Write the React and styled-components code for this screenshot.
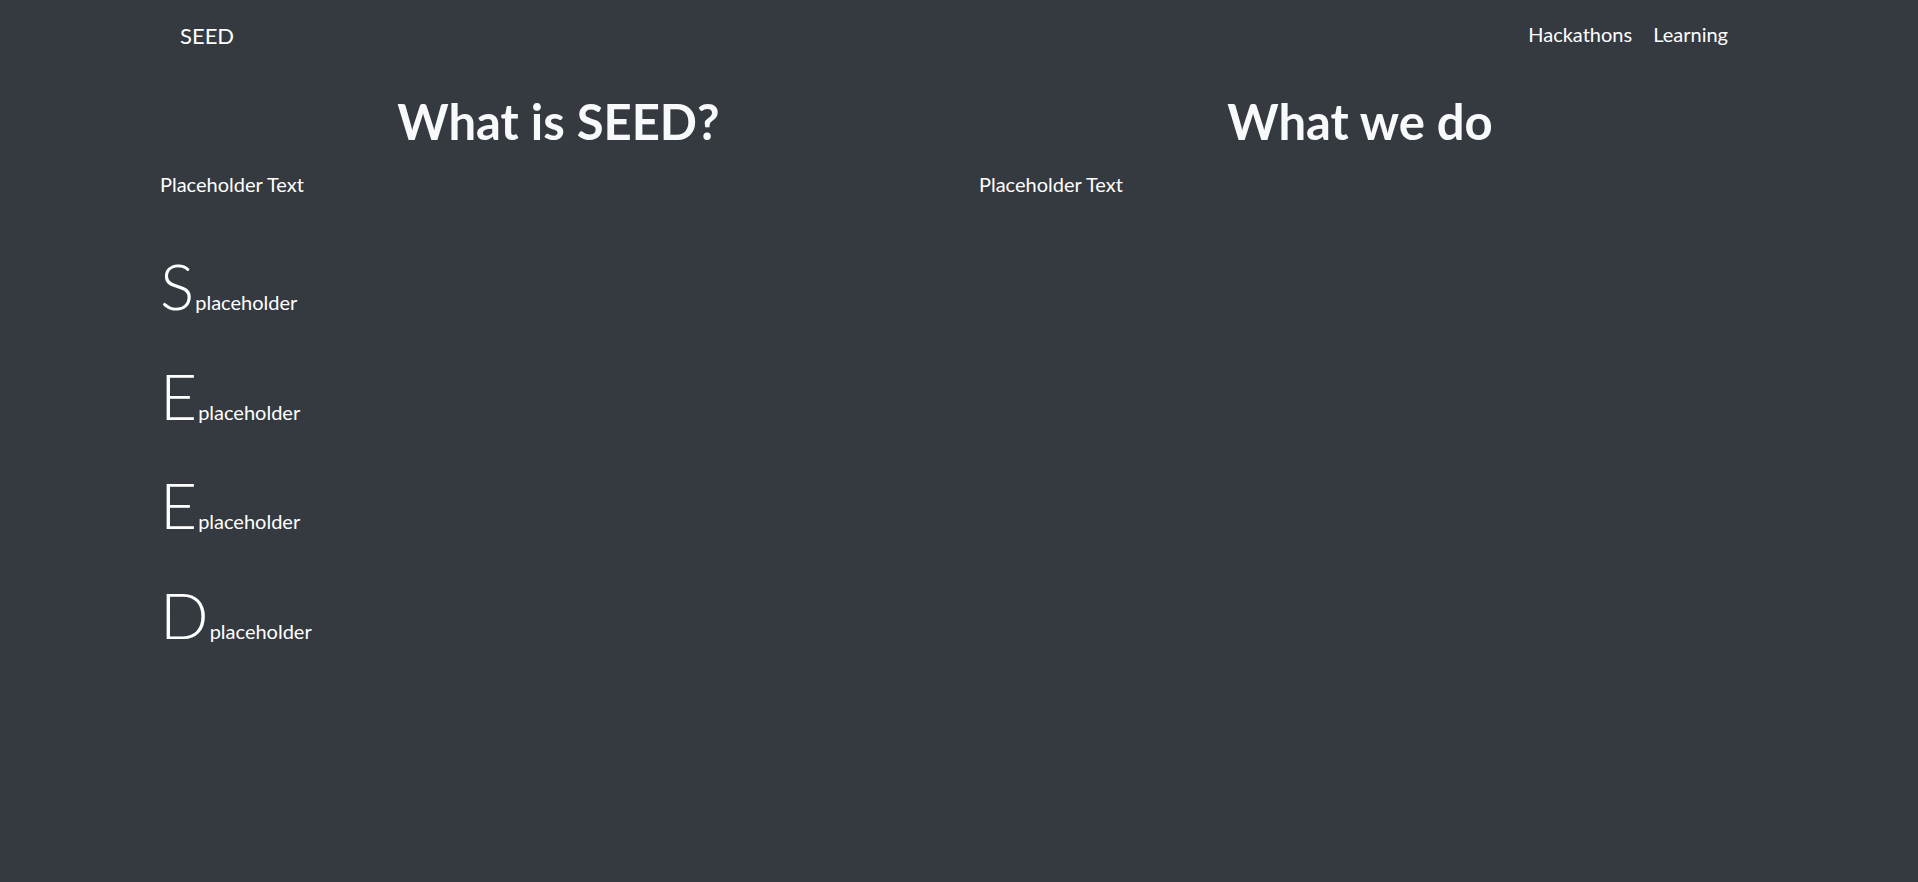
import React from 'react';
import styled, { createGlobalStyle } from 'styled-components';

const GlobalStyle = createGlobalStyle`
  html, body {
    margin: 0;
    padding: 0;
    background-color: #343a40;
    font-family: Lato, "Open Sans", sans-serif;
    color: #ffffff;
  }
`;

const letters = [
  { letter: 'S', text: 'placeholder' },
  { letter: 'E', text: 'placeholder' },
  { letter: 'E', text: 'placeholder' },
  { letter: 'D', text: 'placeholder' },
];

const App = () => (
  <Page>
    <GlobalStyle />
    <Navbar>
      <Brand>SEED</Brand>
      <NavLinks>
        <NavLink>Hackathons</NavLink>
        <NavLink>Learning</NavLink>
      </NavLinks>
    </Navbar>
    <Main>
      <Column>
        <Heading $width={797}>What is SEED?</Heading>
        <Text>Placeholder Text</Text>
        <LetterList>
          {letters.map((item, i) => (
            <LetterRow key={i}>
              <BigLetter>{item.letter}</BigLetter>
              <Word>{item.text}</Word>
            </LetterRow>
          ))}
        </LetterList>
      </Column>
      <Column>
        <Heading $width={762}>What we do</Heading>
        <Text>Placeholder Text</Text>
      </Column>
    </Main>
  </Page>
);

const Page = styled.div`
  min-height: 882px;
  background-color: #343a40;
`;

const Navbar = styled.nav`
  box-sizing: border-box;
  height: 64px;
  padding: 24px 190px 0 180px;
  display: flex;
  justify-content: space-between;
  align-items: flex-start;
`;

const Brand = styled.div`
  font-size: 22px;
  line-height: 1;
  margin-top: 1px;
  color: #ffffff;
`;

const NavLinks = styled.div`
  display: flex;
  gap: 21px;
`;

const NavLink = styled.a`
  font-size: 20px;
  line-height: 1;
  color: #ffffff;
  cursor: pointer;
`;

const Main = styled.main`
  display: grid;
  grid-template-columns: 819px 1fr;
  padding-left: 160px;
`;

const Column = styled.section`
  display: flex;
  flex-direction: column;
`;

const Heading = styled.h1`
  width: ${p => p.$width}px;
  margin: 28px 0 0;
  font-size: 49px;
  font-weight: 700;
  line-height: 1.2;
  text-align: center;
  color: #f8f9fa;
`;

const Text = styled.p`
  margin: 18px 0 0;
  font-size: 20px;
  line-height: 1.5;
`;

const LetterList = styled.div`
  display: flex;
  flex-direction: column;
  gap: 33px;
  margin-top: 49px;
`;

const LetterRow = styled.div`
  display: flex;
  align-items: baseline;
`;

const BigLetter = styled.span`
  font-size: 64px;
  font-weight: 300;
  line-height: 1.2;
`;

const Word = styled.span`
  margin-left: 1px;
  font-size: 20px;
  line-height: 1.5;
`;

export default App;
